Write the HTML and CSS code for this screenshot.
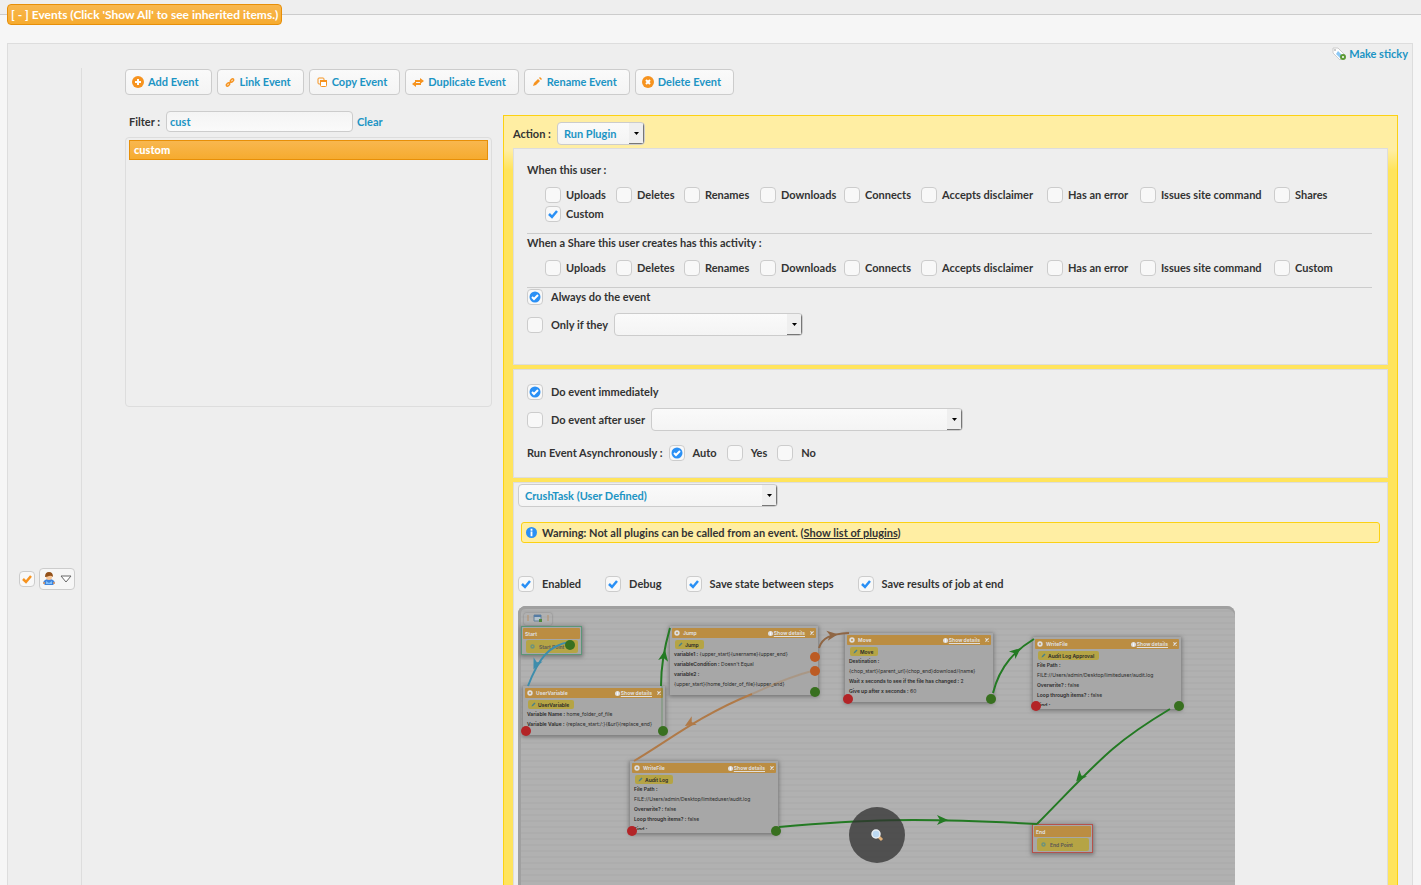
FILE: index.html
```html
<!DOCTYPE html>
<html lang="en">
<head>
  <meta charset="UTF-8" />
  <meta name="viewport" content="width=device-width, initial-scale=1.0" />
  <title>User Manager - Events</title>
  <link rel="stylesheet" href="styles.css">
</head>
<body>

  <!-- Shared icons -->
  <svg class="sprite" aria-hidden="true">
    <symbol id="i-edit" viewBox="0 0 10 10"><path d="M1 9l1-3 5-5 2 2-5 5z" fill="#47808c"/></symbol>
    <symbol id="i-gear" viewBox="0 0 10 10"><circle cx="5" cy="5" r="3" fill="none" stroke="currentColor" stroke-width="3"/></symbol>
    <symbol id="i-info" viewBox="0 0 12 12"><circle cx="6" cy="6" r="6" fill="currentColor"/><path class="cut" d="M5 2h2v2H5zM5 5h2v5H5z"/></symbol>
    <symbol id="i-close" viewBox="0 0 10 10"><path d="M1 1l8 8M9 1L1 9" stroke="currentColor" stroke-width="3"/></symbol>
  </svg>

  <fieldset class="events">
    <legend><button type="button" class="toggle">[ - ] Events (Click 'Show All' to see inherited items.)</button></legend>

    <div class="panel">
      <div class="sticky-row">
        <a href="#" class="sticky-link">
          <svg width="15" height="14" viewBox="0 0 15 14"><path d="M1 1h5l7 7-5 5-7-7z" fill="#fff" stroke="#ccc"/><path d="M6 4l5 5-3 2-4-4z" fill="#8cc8f4"/><circle cx="3" cy="3" r="1" fill="#bbb"/><circle cx="11" cy="10" r="2" fill="#fff" stroke="#5c9a34" stroke-width="2"/></svg>
          Make sticky
        </a>
      </div>

      <div class="panel-row">
        <!-- Inherit column -->
        <div class="inherit">
          <input type="checkbox" class="check orange" aria-label="Override events" checked>
          <button type="button" class="user-menu" aria-label="Inheritance">
            <svg width="14" height="14" viewBox="0 0 14 14"><path d="M1 11q1-4 6-4t6 4l-2 2H3z" fill="#3f83dc"/><path d="M4 9l3 2 3-2v3H4z" fill="#83c2fa"/><circle cx="2" cy="11" r="1" fill="#e99a5b"/><circle cx="12" cy="11" r="1" fill="#e99a5b"/><circle cx="7" cy="5" r="3" fill="#f7c596"/><path d="M3 5q0-5 4-5t4 5q-2-2-4-1T3 5z" fill="#925019"/></svg>
            <svg width="12" height="8" viewBox="0 0 12 8"><path d="M1 1h10L6 7z" fill="#fff" stroke="#666"/></svg>
          </button>
        </div>

        <div class="content">
          <div class="toolbar">
            <button type="button" class="btn"><svg width="12" height="12" viewBox="0 0 12 12"><circle cx="6" cy="6" r="6" fill="#f6931f"/><path d="M6 3v6M3 6h6" stroke="#fff" stroke-width="2"/></svg>Add Event</button>
            <button type="button" class="btn"><svg width="12" height="12" viewBox="0 0 12 12"><g fill="none" stroke="#f6931f" stroke-width="1.5"><ellipse cx="8" cy="4.5" rx="2" ry="1.2" transform="rotate(-40 8 4.5)"/><ellipse cx="4" cy="8.5" rx="2" ry="1.2" transform="rotate(-40 4 8.5)"/><path d="M5 7.500l2-2"/></g></svg>Link Event</button>
            <button type="button" class="btn"><svg width="12" height="12" viewBox="0 0 12 12"><path d="M4 8H3Q2 8 2 7V3q0-1 1-1h4q1 0 1 1v1" fill="none" stroke="#f6931f"/><rect x="4.500" y="4.500" width="6" height="6" rx="1" fill="#fff" stroke="#f6931f"/><path d="M4 4h7v2H4z" fill="#f6931f"/></svg>Copy Event</button>
            <button type="button" class="btn"><svg width="12" height="12" viewBox="0 0 12 12"><path d="M3 4h5V2l4 3-4 3V6H3zM9 7v2H4v2L0 8l4-3v2z" fill="#f6931f"/></svg>Duplicate Event</button>
            <button type="button" class="btn"><svg width="12" height="12" viewBox="0 0 12 12"><path d="M2 10l1-3 4-4 2 2-4 4zM8 2l1-1 2 2-1 1z" fill="#f6931f"/></svg>Rename Event</button>
            <button type="button" class="btn"><svg width="12" height="12" viewBox="0 0 12 12"><circle cx="6" cy="6" r="6" fill="#f6931f"/><path d="M4 4l4 4M8 4L4 8" stroke="#fff" stroke-width="2"/></svg>Delete Event</button>
          </div>

          <div class="columns">
            <!-- Event list -->
            <div class="event-list">
              <div class="filter">
                <label for="filter">Filter :</label>
                <input type="text" id="filter" class="field" value="cust">
                <a href="#">Clear</a>
              </div>
              <ul class="list">
                <li class="selected">custom</li>
              </ul>
            </div>

            <!-- Event details -->
            <div class="details">
              <div class="action">
                <label for="action">Action :</label>
                <select id="action" class="select select-action"><option>Run Plugin</option></select>
              </div>

              <div class="box triggers">
                <p>When this user :</p>
                <div class="check-grid">
                  <label><input type="checkbox" class="check">Uploads</label>
                  <label><input type="checkbox" class="check">Deletes</label>
                  <label><input type="checkbox" class="check">Renames</label>
                  <label><input type="checkbox" class="check">Downloads</label>
                  <label><input type="checkbox" class="check">Connects</label>
                  <label><input type="checkbox" class="check">Accepts disclaimer</label>
                  <label><input type="checkbox" class="check">Has an error</label>
                  <label><input type="checkbox" class="check">Issues site command</label>
                  <label><input type="checkbox" class="check">Shares</label>
                  <label><input type="checkbox" class="check" checked>Custom</label>
                </div>
                <hr>
                <p>When a Share this user creates has this activity :</p>
                <div class="check-grid">
                  <label><input type="checkbox" class="check">Uploads</label>
                  <label><input type="checkbox" class="check">Deletes</label>
                  <label><input type="checkbox" class="check">Renames</label>
                  <label><input type="checkbox" class="check">Downloads</label>
                  <label><input type="checkbox" class="check">Connects</label>
                  <label><input type="checkbox" class="check">Accepts disclaimer</label>
                  <label><input type="checkbox" class="check">Has an error</label>
                  <label><input type="checkbox" class="check">Issues site command</label>
                  <label><input type="checkbox" class="check">Custom</label>
                </div>
                <hr>
                <div class="line">
                  <label class="option"><input type="radio" name="when" class="check" checked>Always do the event</label>
                </div>
                <div class="line line-select">
                  <label class="option"><input type="radio" name="when" class="check">Only if they</label>
                  <select class="select select-cond" aria-label="Condition"><option></option></select>
                </div>
              </div>

              <div class="box timing">
                <div class="line">
                  <label class="option"><input type="radio" name="time" class="check" checked>Do event immediately</label>
                </div>
                <div class="line line-select">
                  <label class="option"><input type="radio" name="time" class="check">Do event after user</label>
                  <select class="select select-after" aria-label="After user"><option></option></select>
                </div>
                <div class="line async">
                  <span>Run Event Asynchronously :</span>
                  <label class="option"><input type="radio" name="async" class="check" checked>Auto</label>
                  <label class="option"><input type="radio" name="async" class="check">Yes</label>
                  <label class="option"><input type="radio" name="async" class="check">No</label>
                </div>
              </div>

              <div class="box plugin">
                <select class="select select-plugin" aria-label="Plugin"><option>CrushTask (User Defined)</option></select>
                <div class="warning">
                  <svg width="11" height="11"><use href="#i-info"/></svg>
                  <span>Warning: Not all plugins can be called from an event. (<a href="#">Show list of plugins</a>)</span>
                </div>
                <div class="flags">
                  <label class="option"><input type="checkbox" class="check" checked>Enabled</label>
                  <label class="option"><input type="checkbox" class="check" checked>Debug</label>
                  <label class="option"><input type="checkbox" class="check" checked>Save state between steps</label>
                  <label class="option"><input type="checkbox" class="check" checked>Save results of job at end</label>
                </div>

                <!-- Job designer preview -->
                <div class="designer">
                  <div class="tools">
                    <svg width="24" height="10" viewBox="0 0 24 10"><path d="M2 2v6M22 2v6" stroke="#b58f68"/><path d="M8 2h7v6H8z" fill="#b5c3cd" stroke="#65809a"/><path d="M8 2h7v2H8z" fill="#557ca5"/><path d="M13 6h3v3h-3z" fill="#4f8a3c"/></svg>
                  </div>

                  <div class="node small n-start">
                    <div class="node-head">Start</div>
                    <span class="chip"><svg width="5" height="5"><use href="#i-gear"/></svg>Start Point</span>
                  </div>
                  <div class="node n-var">
                    <div class="node-head"><svg width="6" height="6"><use href="#i-gear"/></svg>UserVariable<a href="#"><svg width="5" height="5"><use href="#i-info"/></svg><u>Show details</u></a><svg width="4" height="4"><use href="#i-close"/></svg></div>
                    <span class="chip"><svg width="5" height="5"><use href="#i-edit"/></svg>UserVariable</span>
                    <p><b>Variable Name :</b> home_folder_of_file</p>
                    <p><b>Variable Value :</b> {replace_start:/:}{&amp;url}{replace_end}</p>
                  </div>
                  <div class="node n-jump">
                    <div class="node-head"><svg width="6" height="6"><use href="#i-gear"/></svg>Jump<a href="#"><svg width="5" height="5"><use href="#i-info"/></svg><u>Show details</u></a><svg width="4" height="4"><use href="#i-close"/></svg></div>
                    <span class="chip"><svg width="5" height="5"><use href="#i-edit"/></svg>Jump</span>
                    <p><b>variable1 :</b> {upper_start}{username}{upper_end}</p>
                    <p><b>variableCondition :</b> Doesn't Equal</p>
                    <p><b>variable2 :</b></p>
                    <p>{upper_start}{home_folder_of_file}{upper_end}</p>
                  </div>
                  <div class="node n-move">
                    <div class="node-head"><svg width="6" height="6"><use href="#i-gear"/></svg>Move<a href="#"><svg width="5" height="5"><use href="#i-info"/></svg><u>Show details</u></a><svg width="4" height="4"><use href="#i-close"/></svg></div>
                    <span class="chip"><svg width="5" height="5"><use href="#i-edit"/></svg>Move</span>
                    <p><b>Destination :</b></p>
                    <p>{chop_start}{parent_url}{chop_end}download/{name}</p>
                    <p><b>Wait x seconds to see if the file has changed :</b> 2</p>
                    <p><b>Give up after x seconds :</b> 60</p>
                  </div>
                  <div class="node n-approval">
                    <div class="node-head"><svg width="6" height="6"><use href="#i-gear"/></svg>WriteFile<a href="#"><svg width="5" height="5"><use href="#i-info"/></svg><u>Show details</u></a><svg width="4" height="4"><use href="#i-close"/></svg></div>
                    <span class="chip"><svg width="5" height="5"><use href="#i-edit"/></svg>Audit Log Approval</span>
                    <p><b>File Path :</b></p>
                    <p>FILE://Users/admin/Desktop/limiteduser/audit.log</p>
                    <p><b>Overwrite? :</b> false</p>
                    <p><b>Loop through items? :</b> false</p>
                    <p class="cropped"><b>Find :</b></p>
                  </div>
                  <div class="node n-audit">
                    <div class="node-head"><svg width="6" height="6"><use href="#i-gear"/></svg>WriteFile<a href="#"><svg width="5" height="5"><use href="#i-info"/></svg><u>Show details</u></a><svg width="4" height="4"><use href="#i-close"/></svg></div>
                    <span class="chip"><svg width="5" height="5"><use href="#i-edit"/></svg>Audit Log</span>
                    <p><b>File Path :</b></p>
                    <p>FILE://Users/admin/Desktop/limiteduser/audit.log</p>
                    <p><b>Overwrite? :</b> false</p>
                    <p><b>Loop through items? :</b> false</p>
                    <p class="cropped"><b>Find :</b></p>
                  </div>
                  <div class="node small n-end">
                    <div class="node-head">End</div>
                    <span class="chip"><svg width="5" height="5"><use href="#i-gear"/></svg>End Point</span>
                  </div>

                  <!-- Connectors and endpoints -->
                  <svg class="wires" width="717" height="457" viewBox="518 606 717 457">
                    <defs><path id="arrow" d="M6 0L-5-5-2 0-5 5z"/></defs>
                    <g fill="none" stroke-width="2">
                      <path d="M570 642C548 645 538 660 528 686" stroke="#3e8dac"/>
                      <path d="M661 686C661 665 665 645 670 628" stroke="#237a23"/>
                      <path d="M662 726V686" stroke="#237a23" opacity=".2"/>
                      <path d="M819 648C822 638 830 634 849 633" stroke="#8f6644"/>
                      <path d="M752 694C700 715 665 743 634 761" stroke="#b07a48"/>
                      <path d="M812 671C785 678 770 686 752 694" stroke="#b07a48" opacity=".35"/>
                      <path d="M993 693C1000 665 1016 650 1034 639" stroke="#237a23"/>
                      <path d="M1170 709C1110 745 1100 760 1037 824" stroke="#237a23"/>
                      <path d="M779 827C860 820 910 817 1037 824" stroke="#237a23"/>
                    </g>
                    <use href="#arrow" transform="translate(536 664) rotate(115)" fill="#3e8dac"/>
                    <use href="#arrow" transform="translate(664 656) rotate(-80)" fill="#237a23"/>
                    <use href="#arrow" transform="translate(832 635) rotate(-8)" fill="#8f6644"/>
                    <use href="#arrow" transform="translate(690 723) rotate(149)" fill="#b07a48"/>
                    <use href="#arrow" transform="translate(1016 652) rotate(-40)" fill="#237a23"/>
                    <use href="#arrow" transform="translate(1080 777) rotate(130)" fill="#237a23"/>
                    <use href="#arrow" transform="translate(942 820)" fill="#237a23"/>
                    <g fill="#38701f">
                      <circle cx="570" cy="645" r="5"/><circle cx="663" cy="731" r="5"/><circle cx="815" cy="692" r="5"/>
                      <circle cx="991" cy="699" r="5"/><circle cx="1179" cy="706" r="5"/><circle cx="776" cy="831" r="5"/>
                    </g>
                    <g fill="#bc5b24"><circle cx="815" cy="657" r="5"/><circle cx="815" cy="671" r="5"/></g>
                    <g fill="#b32427">
                      <circle cx="526" cy="731" r="5"/><circle cx="848" cy="699" r="5"/>
                      <circle cx="1036" cy="706" r="5"/><circle cx="632" cy="831" r="5"/>
                    </g>
                  </svg>

                  <button type="button" class="zoom" aria-label="Open job designer">
                    <svg width="14" height="14" viewBox="0 0 14 14"><path d="M8 8l4 4" stroke="#e0b079" stroke-width="3"/><circle cx="6" cy="6" r="4" fill="#bcd9f2" stroke="#e9eef2" stroke-width="1.5"/></svg>
                  </button>
                </div>
              </div>
            </div>
          </div>
        </div>
      </div>
    </div>
  </fieldset>

</body>
</html>
```
FILE: styles.css
```css
* { margin: 0; padding: 0; box-sizing: border-box; }
body {
  height: 100vh;
  overflow: hidden;
  padding-top: 4px;
  background-color: #eee;
  color: #333;
  font-family: 'Lato', sans-serif;
  font-size: 11px;
  font-weight: 700;
  line-height: 16px;
}
button, input, select { font: inherit; color: inherit; }
a { color: #1c94c4; text-decoration: none; }
.sprite { position: absolute; width: 0; height: 0; }
.cut { fill: #fff; }

/* --- fieldset --- */
.events {
  border: 0;
  border-top: 1px solid #ccc;
  padding: 0 8px 0 7px;
  background-color: #f6f6f6;
}
.toggle {
  display: block;
  height: 21px;
  padding: 0 3px;
  border: 1px solid #e78f08;
  border-radius: 4px;
  background: linear-gradient(#f8b74f, #f6ab2f);
  color: #fff;
  font-size: 12px;
  line-height: 19px;
}
.panel {
  margin-top: 18px;
  border: 1px solid #ddd;
  background-color: #eee;
}
.sticky-row {
  display: flex;
  justify-content: flex-end;
  height: 24px;
  padding: 2px 4px 0 0;
}
.sticky-link {
  display: flex;
  align-items: center;
  gap: 2px;
  height: 16px;
}
.panel-row { display: flex; }
.inherit {
  display: flex;
  flex: 0 0 74px;
  align-items: center;
  gap: 4px;
  padding-left: 11px;
  border-right: 1px solid #ddd;
}
.user-menu {
  display: flex;
  align-items: center;
  justify-content: center;
  gap: 4px;
  width: 36px;
  height: 22px;
  border: 1px solid #ccc;
  border-radius: 4px;
  background-color: #f6f6f6;
}
.content {
  flex: 1;
  min-width: 0;
  padding: 1px 14px 8px 43px;
}

/* --- toolbar --- */
.toolbar { display: flex; gap: 5px; }
.btn {
  display: flex;
  align-items: center;
  gap: 4px;
  height: 26px;
  padding: 0 12px 0 6px;
  border: 1px solid #ccc;
  border-radius: 4px;
  background: linear-gradient(#fafafa, #f4f4f4);
  color: #1c94c4;
}

/* --- event list --- */
.columns {
  display: flex;
  align-items: flex-start;
  gap: 11px;
}
.event-list { flex: 0 0 367px; }
.filter {
  display: flex;
  align-items: center;
  gap: 4px;
  margin-top: 16px;
  padding-left: 4px;
}
.filter label { margin-right: 2px; }
.field {
  width: 187px;
  height: 21px;
  padding: 0 3px;
  border: 1px solid #ccc;
  border-radius: 4px;
  background: linear-gradient(#f4f4f4, #fafafa);
  color: #1c94c4;
}
.list {
  height: 270px;
  margin-top: 5px;
  padding: 2px 3px;
  border: 1px solid #ddd;
  border-radius: 4px;
  list-style: none;
}
.selected {
  padding: 0 4px;
  border: 1px solid #e78f08;
  background: linear-gradient(#f8b74f, #f6ab2f);
  color: #fff;
  font-weight: 900;
  line-height: 18px;
}

/* --- details --- */
.details {
  flex: 1;
  min-width: 0;
  margin-top: 20px;
  padding: 0 9px 9px;
  border: 1px solid #fcd113;
  background: linear-gradient(#ffeea3 34px, #ffe45c 54px);
}
.action {
  display: flex;
  align-items: center;
  gap: 6px;
  height: 32px;
  padding-top: 3px;
}
.box {
  border: 1px solid #ddd;
  background-color: #eee;
}
.box + .box { margin-top: 4px; }
.triggers { padding: 13px 15px 26px 13px; }
.check-grid {
  display: grid;
  grid-template-columns: 71px 68px 76px 84px 77px 126px 93px 134px auto;
  margin: 7px 0 10px 18px;
}
.check-grid label {
  display: flex;
  align-items: center;
  gap: 5px;
  height: 19px;
  white-space: nowrap;
}
hr {
  height: 1px;
  margin-bottom: 1px;
  border: 0;
  background-color: #ccc;
}
.check {
  flex: none;
  width: 16px;
  height: 16px;
  appearance: none;
  border: 1px solid #ccc;
  border-radius: 4px;
  background: #f8f8f8 no-repeat center;
}
.check:checked {
  background-image: url("data:image/svg+xml,%3Csvg xmlns='http://www.w3.org/2000/svg' width='12' height='12'%3E%3Cpath d='M2 6l3 3 5-6' fill='none' stroke='%232a90f5' stroke-width='2.500'/%3E%3C/svg%3E");
}
.check.orange:checked {
  background-image: url("data:image/svg+xml,%3Csvg xmlns='http://www.w3.org/2000/svg' width='12' height='12'%3E%3Cpath d='M2 6l3 3 5-6' fill='none' stroke='%23f6931f' stroke-width='2.500'/%3E%3C/svg%3E");
}
.check[type=radio]:checked {
  background-image: url("data:image/svg+xml,%3Csvg xmlns='http://www.w3.org/2000/svg' width='12' height='12'%3E%3Ccircle cx='6' cy='6' r='5.500' fill='%232a90f5'/%3E%3Cpath d='M3 6l2 2 4-4' fill='none' stroke='%23fff' stroke-width='2'/%3E%3C/svg%3E");
}
.option {
  display: flex;
  align-items: center;
  gap: 8px;
}
.line {
  display: flex;
  align-items: center;
  gap: 6px;
}
.line-select { margin-top: 8px; }
.select {
  height: 23px;
  padding: 0 18px 0 6px;
  appearance: none;
  border: 1px solid #ccc;
  border-radius: 4px;
  background:
    url("data:image/svg+xml,%3Csvg xmlns='http://www.w3.org/2000/svg' width='15' height='21'%3E%3Cpath d='M0 0h15v21H0z' fill='%23efefef'/%3E%3Cpath d='M14 0h1v21H0v-1h14z' fill='%23777'/%3E%3Cpath d='M5 9h5l-2.500 3z' fill='%23000'/%3E%3C/svg%3E") no-repeat right center,
    linear-gradient(#fafafa, #f4f4f4);
  color: #1c94c4;
}
.select-action { width: 88px; }
.select-cond { width: 189px; }
.select-after { width: 312px; }
.select-plugin { width: 260px; }

.triggers { padding-bottom: 28px; }
.timing { padding: 14px 13px 16px; }
.async { margin-top: 14px; }
.async .option { margin-right: 4px; }

/* --- plugin --- */
.plugin { padding: 1px 4px 8px; }
.select-plugin { display: block; }
.warning {
  display: flex;
  align-items: center;
  gap: 5px;
  height: 21px;
  margin: 15px 3px 0;
  padding: 0 4px;
  border: 1px solid #fcd113;
  border-radius: 3px;
  background-color: #ffeea3;
}
.warning svg { color: #2a90f5; }
.warning a { color: #333; text-decoration: underline; }
.flags {
  display: flex;
  gap: 24px;
  margin: 33px 0 14px;
}

/* --- designer --- */
.designer {
  position: relative;
  width: 717px;
  height: 457px;
  border-radius: 8px;
  background: repeating-linear-gradient(#b1b1b1 0 4px, #adadad 4px 6px);
  box-shadow: inset 0 3px #a0a0a0, inset 3px 0 #a0a0a0;
  overflow: hidden;
  color: #292929;
  font-family: 'Inter', sans-serif;
  font-size: 5px;
  line-height: 10px;
}
.tools {
  position: absolute;
  left: 6px;
  top: 7px;
  width: 28px;
  height: 12px;
  padding: 0 2px;
  border-radius: 2px;
  box-shadow: 0 0 2px #777;
}
.node {
  position: absolute;
  width: 148px;
  height: 69px;
  padding: 2px;
  background-color: #a7a7a7;
  box-shadow: 0 1px 4px 1px #777;
  font-weight: 400;
  white-space: nowrap;
}
.node b { font-weight: 600; }
.node p { height: 10px; padding-left: 2px; }
.node .cropped { height: 6px; overflow: hidden; }
.node-head {
  display: flex;
  align-items: center;
  gap: 3px;
  height: 10px;
  padding: 0 2px;
  border-radius: 1px;
  background-color: #bb8d42;
  color: #dedede;
  font-weight: 700;
}
.node-head a {
  display: flex;
  align-items: center;
  gap: 1px;
  margin-left: auto;
  margin-right: 2px;
  color: inherit;
}
.node-head .cut { fill: #bb8d42; }
.chip {
  display: flex;
  align-items: center;
  gap: 2px;
  width: max-content;
  height: 9px;
  margin: 2px 0 0 3px;
  padding: 0 5px 0 3px;
  border-radius: 2px;
  background-color: #b5a445;
  font-weight: 600;
}
.small { width: 61px; height: 29px; padding: 1px; }
.small .chip { width: 52px; height: 13px; margin-top: 1px; gap: 4px; padding-left: 4px; color: #555; }
.small .chip svg { color: #6d937b; }
.small .node-head { height: 11px; }
.n-start { left: 3px; top: 20px; border: 1px solid #5b9678; }
.n-var { left: 5px; top: 80px; width: 142px; height: 49px; }
.n-jump { left: 152px; top: 20px; }
.n-move { left: 327px; top: 27px; }
.n-approval { left: 515px; top: 31px; height: 72px; }
.n-audit { left: 112px; top: 155px; height: 72px; }
.n-end { left: 514px; top: 218px; border: 1px solid #b5524c; }
.wires {
  position: absolute;
  left: 0;
  top: 0;
}
.zoom {
  display: flex;
  position: absolute;
  left: 331px;
  top: 201px;
  align-items: center;
  justify-content: center;
  width: 56px;
  height: 56px;
  border: 0;
  border-radius: 50%;
  background-color: rgba(48, 48, 48, 0.75);
}
```
